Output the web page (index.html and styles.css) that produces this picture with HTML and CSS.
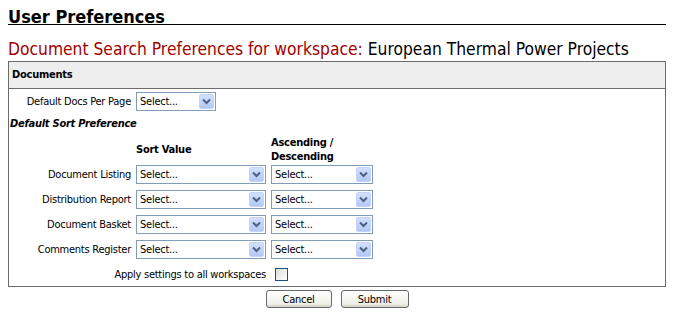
FILE: index.html
```html
<!DOCTYPE html>
<html lang="en">
<head>
    <meta charset="UTF-8">
    <title>User Preferences</title>
    <link rel="stylesheet" href="styles.css">
</head>
<body>
    <h1 class="page-title">User Preferences</h1>
    <h2 class="subtitle"><span class="subtitle-label">Document Search Preferences for workspace:</span> European Thermal Power Projects</h2>

    <div class="panel">
        <div class="panel-head">Documents</div>
        <div class="panel-body">
            <div class="form-grid">
                <label class="field-label">Default Docs Per Page</label>
                <div class="dd dd-small"><span>Select...</span><span class="dd-btn"><svg width="9" height="7" viewBox="0 0 9 7"><path d="M1 1.5 L4.5 5 L8 1.5" fill="none" stroke="#4d6185" stroke-width="2"/></svg></span></div>
                <div></div>

                <div class="section-title">Default Sort Preference</div>

                <div></div>
                <div class="col-head col-head-low">Sort Value</div>
                <div class="col-head">Ascending /<br>Descending</div>

                <label class="field-label">Document Listing</label>
                <div class="dd"><span>Select...</span><span class="dd-btn"><svg width="9" height="7" viewBox="0 0 9 7"><path d="M1 1.5 L4.5 5 L8 1.5" fill="none" stroke="#4d6185" stroke-width="2"/></svg></span></div>
                <div class="dd"><span>Select...</span><span class="dd-btn"><svg width="9" height="7" viewBox="0 0 9 7"><path d="M1 1.5 L4.5 5 L8 1.5" fill="none" stroke="#4d6185" stroke-width="2"/></svg></span></div>

                <label class="field-label">Distribution Report</label>
                <div class="dd"><span>Select...</span><span class="dd-btn"><svg width="9" height="7" viewBox="0 0 9 7"><path d="M1 1.5 L4.5 5 L8 1.5" fill="none" stroke="#4d6185" stroke-width="2"/></svg></span></div>
                <div class="dd"><span>Select...</span><span class="dd-btn"><svg width="9" height="7" viewBox="0 0 9 7"><path d="M1 1.5 L4.5 5 L8 1.5" fill="none" stroke="#4d6185" stroke-width="2"/></svg></span></div>

                <label class="field-label">Document Basket</label>
                <div class="dd"><span>Select...</span><span class="dd-btn"><svg width="9" height="7" viewBox="0 0 9 7"><path d="M1 1.5 L4.5 5 L8 1.5" fill="none" stroke="#4d6185" stroke-width="2"/></svg></span></div>
                <div class="dd"><span>Select...</span><span class="dd-btn"><svg width="9" height="7" viewBox="0 0 9 7"><path d="M1 1.5 L4.5 5 L8 1.5" fill="none" stroke="#4d6185" stroke-width="2"/></svg></span></div>

                <label class="field-label">Comments Register</label>
                <div class="dd"><span>Select...</span><span class="dd-btn"><svg width="9" height="7" viewBox="0 0 9 7"><path d="M1 1.5 L4.5 5 L8 1.5" fill="none" stroke="#4d6185" stroke-width="2"/></svg></span></div>
                <div class="dd"><span>Select...</span><span class="dd-btn"><svg width="9" height="7" viewBox="0 0 9 7"><path d="M1 1.5 L4.5 5 L8 1.5" fill="none" stroke="#4d6185" stroke-width="2"/></svg></span></div>

                <label class="apply-label">Apply settings to all workspaces</label>
                <div><span class="checkbox"></span></div>
            </div>
        </div>
    </div>

    <div class="actions">
        <button class="btn btn-cancel">Cancel</button>
        <button class="btn btn-submit">Submit</button>
    </div>
</body>
</html>
```

FILE: styles.css
```css
body { margin: 8px; background: #fff; color: #000; font-family: "DejaVu Sans Condensed", "DejaVu Sans", sans-serif; font-size: 11px; letter-spacing: -0.25px; }
.page-title { margin: 0; font-size: 18px; line-height: 17px; font-weight: bold; letter-spacing: 0; border-bottom: 1px solid #000; height: 16px; }
.subtitle { margin: 13px 0 0; font-size: 17.3px; line-height: 22px; font-weight: normal; letter-spacing: 0; color: #000; height: 23px; white-space: nowrap; }
.subtitle-label { color: #a00000; }
.panel { border: 1px solid #6b6b6b; }
.panel-head { background: #eeeeee; border-bottom: 1px solid #6b6b6b; height: 26px; line-height: 26px; padding-left: 3px; font-weight: bold; }
.panel-body { padding: 3px 0 5px 0; }
.form-grid { display: grid; grid-template-columns: 122px 130px 102px; column-gap: 5px; row-gap: 6px; align-items: center; }
.field-label { text-align: right; white-space: nowrap; }
.section-title { grid-column: 1 / 4; font-weight: bold; font-style: italic; padding-left: 1px; }
.col-head { font-weight: bold; line-height: 14px; margin-bottom: -5px; }
.col-head-low { align-self: center; }
.dd { display: flex; align-items: center; justify-content: space-between; height: 19px; box-sizing: border-box; border: 1px solid #7f9db9; background: #fff; padding: 1px 1px 1px 3px; }
.dd-small { width: 80px; }
.dd-btn { display: flex; align-items: center; justify-content: center; width: 15px; height: 15px; box-sizing: border-box; background: linear-gradient(#d2e0fd, #b4c8f5); border: 1px solid #c3d3fd; border-radius: 2px; }
.apply-label { grid-column: 1 / 3; text-align: right; margin-top: 3px; }
.checkbox { display: block; width: 13px; height: 13px; box-sizing: border-box; border: 1px solid #1c5180; background: linear-gradient(135deg, #dcdcd7, #fff); margin-left: 4px; margin-top: 3px; }
.actions { display: flex; justify-content: center; gap: 9px; margin-top: 3px; }
.btn { height: 18px; padding: 0; font-family: inherit; font-size: 11px; letter-spacing: -0.25px; border: 1px solid #666b70; border-radius: 3px; background: linear-gradient(#ffffff, #f0f0ea 80%, #d6d0c5); color: #000; }
.btn-cancel { width: 66px; }
.btn-submit { width: 68px; }
```
